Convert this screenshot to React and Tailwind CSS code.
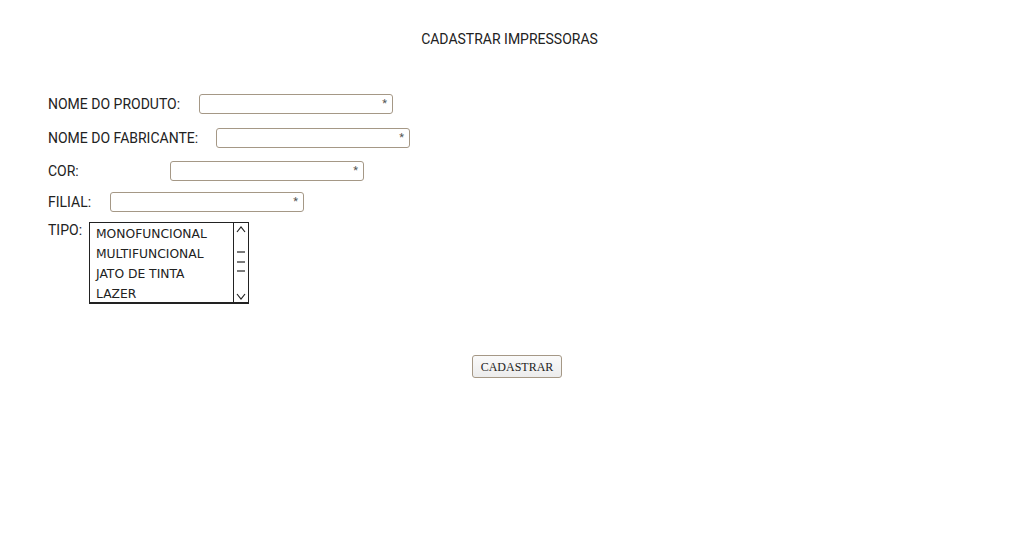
import React from "react";

const rowsData = [
  { label: "NOME DO PRODUTO:", lw: "w-[151px]", mt: "mt-0" },
  { label: "NOME DO FABRICANTE:", lw: "w-[168px]", mt: "mt-[14px]" },
  { label: "COR:", lw: "w-[122px]", mt: "mt-[13px]" },
  { label: "FILIAL:", lw: "w-[62px]", mt: "mt-[11px]" },
];

function Field() {
  return (
    <div className="relative w-[194px] h-[20px] border border-[#a59886] rounded-[3px] bg-white">
      <span className="absolute right-[5px] top-[1px] text-[11px] text-[#555] leading-[16px]">*</span>
    </div>
  );
}

export default function App() {
  return (
    <div className="w-[1028px] h-[545px] bg-white text-[#222]" style={{ fontFamily: "Roboto, 'Liberation Sans', sans-serif" }}>
      <div className="pt-[31px] text-center text-[14px] leading-[16px] pr-[9px]">CADASTRAR IMPRESSORAS</div>
      <div className="pl-[48px] pt-[47px]">
        {rowsData.map((r, i) => (
          <div key={i} className={`flex items-center ${r.mt}`}>
            <div className={`${r.lw} text-[14px] leading-[16px]`}>{r.label}</div>
            <Field />
          </div>
        ))}
        <div className="flex items-start mt-[10px]">
          <div className="w-[41px] text-[14px] leading-[16px]">TIPO:</div>
          <div className="flex w-[160px] h-[82px] border border-[#222] bg-white" style={{ borderBottomWidth: 2 }}>
            <div className="flex-1 pl-[6px] pt-[1px] leading-[20px] text-[#222]" style={{ fontFamily: "'Comic Sans MS', 'DejaVu Sans', sans-serif" }}>
              <div className="text-[12.3px]">MONOFUNCIONAL</div>
              <div className="text-[12.3px]">MULTIFUNCIONAL</div>
              <div className="text-[12.3px]">JATO DE TINTA</div>
              <div className="text-[12.3px]">LAZER</div>
            </div>
            <div className="w-[15px] border-l border-[#222] relative">
              <svg width="14" height="80" viewBox="0 0 14 80" className="absolute left-0 top-0">
                <path d="M3 9 L7 4 L11 9" stroke="#222" strokeWidth="1.2" fill="none" />
                <path d="M3 29 L11 29" stroke="#222" strokeWidth="1.2" />
                <path d="M3 39 L11 39" stroke="#222" strokeWidth="1.2" />
                <path d="M3 48 L11 48" stroke="#222" strokeWidth="1.2" />
                <path d="M3 71 L7 76 L11 71" stroke="#222" strokeWidth="1.2" fill="none" />
              </svg>
            </div>
          </div>
        </div>
      </div>
      <div className="flex justify-center mt-[51px] pl-[6px]">
        <button className="w-[90px] h-[23px] border border-[#a59886] rounded-[3px] bg-gradient-to-b from-[#fafafa] to-[#ececec] text-[12px] text-[#222]" style={{ fontFamily: "'Liberation Serif', serif" }}>
          CADASTRAR
        </button>
      </div>
    </div>
  );
}
